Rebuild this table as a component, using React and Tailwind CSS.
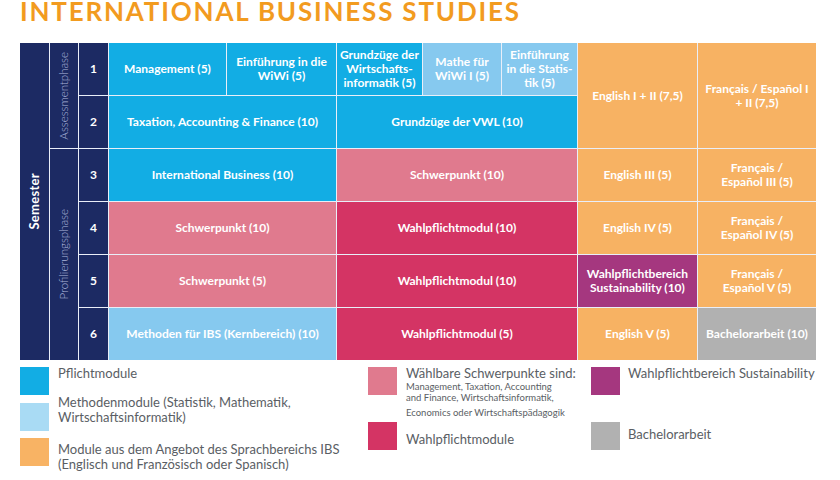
import React from "react";

const C = {
  cyan: "bg-[#12ade4]",
  light: "bg-[#86c9ef]",
  orange: "bg-[#f7b263]",
  pink: "bg-[#e07a8e]",
  crimson: "bg-[#d43464]",
  purple: "bg-[#a5377f]",
  grey: "bg-[#b1b1b1]",
  navy: "bg-[#1c2a63]",
};

function Cell({ className = "", children }) {
  return (
    <div
      className={`flex items-center justify-center text-center text-white font-bold text-[12px] leading-[14px] px-1 ${className}`}
    >
      <span>{children}</span>
    </div>
  );
}

function Num({ row, children }) {
  return (
    <div className={`${C.navy} col-start-3 ${row} flex items-center justify-center text-white font-bold text-[12px]`}>
      {children}
    </div>
  );
}

function Legend({ color, children, className = "" }) {
  return (
    <div className={`flex items-start ${className}`}>
      <div className={`w-[29px] h-[28px] shrink-0 ${color}`} />
      {children}
    </div>
  );
}

export default function App() {
  return (
    <div className="w-[840px] h-[480px] bg-white overflow-hidden [font-family:Lato,'Open_Sans',sans-serif]">
      <div className="pl-[20px] -mt-[2px] h-[45px] text-[26px] leading-[26px] font-bold text-[#f29b1f] tracking-[1.8px] whitespace-nowrap">
        INTERNATIONAL BUSINESS STUDIES
      </div>

      <div className="ml-[20px] w-[796px] grid grid-cols-[29px_28px_29px_117px_109px_85px_78px_75px_119px_118px] grid-rows-[repeat(6,52px)] gap-px bg-[#e9eef8]">
        {/* Semester */}
        <div className={`${C.navy} col-start-1 row-start-1 row-span-6 flex items-center justify-center`}>
          <span className="[writing-mode:vertical-rl] rotate-180 text-white font-bold text-[13px] tracking-[0.3px]">
            Semester
          </span>
        </div>
        <div className={`${C.navy} col-start-2 row-start-1 row-span-2 flex items-center justify-center`}>
          <span className="[writing-mode:vertical-rl] rotate-180 text-[#aeb6dc] text-[11.5px] font-light">
            Assessmentphase
          </span>
        </div>
        <div className={`${C.navy} col-start-2 row-start-3 row-span-4 flex items-center justify-center`}>
          <span className="[writing-mode:vertical-rl] rotate-180 text-[#aeb6dc] text-[11.5px] font-light">
            Profilierungsphase
          </span>
        </div>
        <Num row="row-start-1">1</Num>
        <Num row="row-start-2">2</Num>
        <Num row="row-start-3">3</Num>
        <Num row="row-start-4">4</Num>
        <Num row="row-start-5">5</Num>
        <Num row="row-start-6">6</Num>

        {/* Row 1 */}
        <Cell className={`${C.cyan} col-start-4 row-start-1`}>Management (5)</Cell>
        <Cell className={`${C.cyan} col-start-5 row-start-1`}>
          Einführung in die
          <br />
          WiWi (5)
        </Cell>
        <Cell className={`${C.cyan} col-start-6 row-start-1 !px-0`}>
          Grundzüge der
          <br />
          Wirtschafts-
          <br />
          informatik (5)
        </Cell>
        <Cell className={`${C.light} col-start-7 row-start-1`}>
          Mathe für
          <br />
          WiWi I (5)
        </Cell>
        <Cell className={`${C.light} col-start-8 row-start-1 !px-0`}>
          Einführung
          <br />
          in die Statis-
          <br />
          tik (5)
        </Cell>
        <Cell className={`${C.orange} col-start-9 row-start-1 row-span-2`}>English I + II (7,5)</Cell>
        <Cell className={`${C.orange} col-start-10 row-start-1 row-span-2`}>
          Français / Español I
          <br />+ II (7,5)
        </Cell>

        {/* Row 2 */}
        <Cell className={`${C.cyan} col-start-4 col-span-2 row-start-2`}>Taxation, Accounting &amp; Finance (10)</Cell>
        <Cell className={`${C.cyan} col-start-6 col-span-3 row-start-2`}>Grundzüge der VWL (10)</Cell>

        {/* Row 3 */}
        <Cell className={`${C.cyan} col-start-4 col-span-2 row-start-3`}>International Business (10)</Cell>
        <Cell className={`${C.pink} col-start-6 col-span-3 row-start-3`}>Schwerpunkt (10)</Cell>
        <Cell className={`${C.orange} col-start-9 row-start-3`}>English III (5)</Cell>
        <Cell className={`${C.orange} col-start-10 row-start-3`}>
          Français /
          <br />
          Español III (5)
        </Cell>

        {/* Row 4 */}
        <Cell className={`${C.pink} col-start-4 col-span-2 row-start-4`}>Schwerpunkt (10)</Cell>
        <Cell className={`${C.crimson} col-start-6 col-span-3 row-start-4`}>Wahlpflichtmodul (10)</Cell>
        <Cell className={`${C.orange} col-start-9 row-start-4`}>English IV (5)</Cell>
        <Cell className={`${C.orange} col-start-10 row-start-4`}>
          Français /
          <br />
          Español IV (5)
        </Cell>

        {/* Row 5 */}
        <Cell className={`${C.pink} col-start-4 col-span-2 row-start-5`}>Schwerpunkt (5)</Cell>
        <Cell className={`${C.crimson} col-start-6 col-span-3 row-start-5`}>Wahlpflichtmodul (10)</Cell>
        <Cell className={`${C.purple} col-start-9 row-start-5`}>
          Wahlpflichtbereich
          <br />
          Sustainability (10)
        </Cell>
        <Cell className={`${C.orange} col-start-10 row-start-5`}>
          Français /
          <br />
          Español V (5)
        </Cell>

        {/* Row 6 */}
        <Cell className={`${C.light} col-start-4 col-span-2 row-start-6`}>Methoden für IBS (Kernbereich) (10)</Cell>
        <Cell className={`${C.crimson} col-start-6 col-span-3 row-start-6`}>Wahlpflichtmodul (5)</Cell>
        <Cell className={`${C.orange} col-start-9 row-start-6`}>English V (5)</Cell>
        <Cell className={`${C.grey} col-start-10 row-start-6`}>Bachelorarbeit (10)</Cell>
      </div>

      {/* Legend */}
      <div className="flex mt-[7px] text-[#5a5e64] text-[13px] leading-[15px]">
        <div className="ml-[20px] w-[348px] flex flex-col">
          <Legend color="bg-[#12ade4]" className="h-[36px]">
            <div className="ml-[9px] -mt-[1px]">Pflichtmodule</div>
          </Legend>
          <Legend color="bg-[#a9dbf4]" className="h-[35px]">
            <div className="ml-[9px] -mt-[8px]">
              Methodenmodule (Statistik, Mathematik,
              <br />
              Wirtschaftsinformatik)
            </div>
          </Legend>
          <Legend color="bg-[#f8b364]">
            <div className="ml-[9px] mt-[4px]">
              Module aus dem Angebot des Sprachbereichs IBS
              <br />
              (Englisch und Französisch oder Spanisch)
            </div>
          </Legend>
        </div>
        <div className="w-[223px] flex flex-col">
          <Legend color="bg-[#e07a8e]" className="h-[55px]">
            <div className="ml-[9px] -mt-[1px]">
              <div>Wählbare Schwerpunkte sind:</div>
              <div className="text-[9.5px] leading-[11px]">
                Management, Taxation, Accounting
                <br />
                and Finance, Wirtschaftsinformatik,
              </div>
              <div className="text-[9.5px] leading-[11px] mt-[4px]">Economics oder Wirtschaftspädagogik</div>
            </div>
          </Legend>
          <Legend color="bg-[#d43464]">
            <div className="ml-[9px] mt-[10px]">Wahlpflichtmodule</div>
          </Legend>
        </div>
        <div className="flex flex-col">
          <Legend color="bg-[#a5377f]" className="h-[55px]">
            <div className="ml-[8px] -mt-[1px]">Wahlpflichtbereich Sustainability</div>
          </Legend>
          <Legend color="bg-[#b1b1b1]">
            <div className="ml-[8px] mt-[5px]">Bachelorarbeit</div>
          </Legend>
        </div>
      </div>
    </div>
  );
}
